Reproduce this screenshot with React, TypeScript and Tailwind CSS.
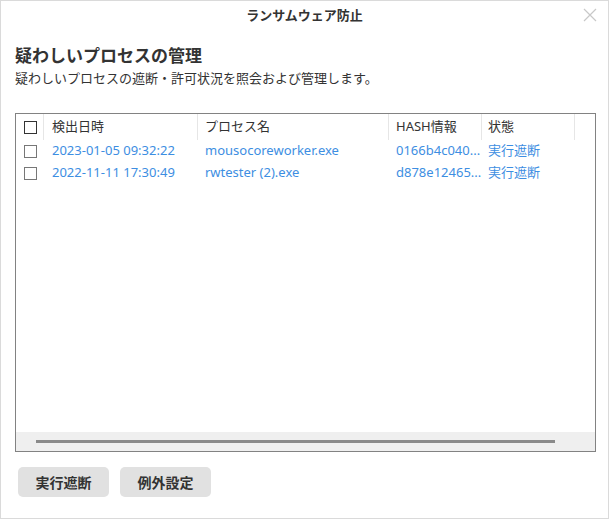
import React from 'react';

const rows = [
  { date: '2023-01-05 09:32:22', name: 'mousocoreworker.exe', hash: '0166b4c040...', state: '実行遮断' },
  { date: '2022-11-11 17:30:49', name: 'rwtester (2).exe', hash: 'd878e12465...', state: '実行遮断' },
];

const Box = ({ dark }: { dark?: boolean }) => (
  <div className={`w-[13px] h-[13px] border bg-white ${dark ? 'border-[#333]' : 'border-[#777]'}`} />
);

export default function App() {
  return (
    <div
      className="w-[610px] h-[520px] bg-white text-[#333]"
      style={{ fontFamily: '"Noto Sans", "Noto Sans CJK JP", sans-serif' }}
    >
      <div className="w-[609px] h-[519px] border border-[#dadada] flex flex-col">
        {/* title bar */}
        <div className="relative h-[28px] flex items-center justify-center">
          <span className="text-[13px] font-semibold leading-none">ランサムウェア防止</span>
          <svg className="absolute right-[10px] top-[6px]" width="16" height="16" viewBox="0 0 16 16">
            <path d="M2 2 L14 14 M14 2 L2 14" stroke="#c8c8c8" strokeWidth="1.2" fill="none" />
          </svg>
        </div>

        <div className="px-[14px] pt-[16px]">
          <h1 className="text-[17px] font-semibold leading-[22px]">疑わしいプロセスの管理</h1>
          <p className="text-[13px] leading-[18px] mt-[2px]">疑わしいプロセスの遮断・許可状況を照会および管理します。</p>

          {/* table */}
          <div className="mt-[26px] w-[581px] h-[339px] border border-[#828282] flex flex-col">
            <div className="flex-1">
              <div className="flex h-[26px] items-center text-[13px]">
                <div className="w-[27px] flex justify-center pl-[1px]"><Box dark /></div>
                <div className="w-[154px] h-full flex items-center pl-[8px] border-l border-[#e6e6e6]">検出日時</div>
                <div className="w-[191px] h-full flex items-center pl-[7px] border-l border-[#e6e6e6]">プロセス名</div>
                <div className="w-[93px] h-full flex items-center pl-[7px] border-l border-[#e6e6e6]">HASH情報</div>
                <div className="w-[93px] h-full flex items-center pl-[6px] border-l border-[#e6e6e6]">状態</div>
                <div className="h-full border-l border-[#e6e6e6]" />
              </div>
              {rows.map((r) => (
                <div key={r.date} className="flex h-[22px] items-center text-[13px] text-[#3d8ee2]">
                  <div className="w-[27px] flex justify-center pl-[1px]"><Box /></div>
                  <div className="w-[154px] pl-[9px]">{r.date}</div>
                  <div className="w-[191px] pl-[8px]">{r.name}</div>
                  <div className="w-[93px] pl-[8px]">{r.hash}</div>
                  <div className="w-[93px] pl-[7px]">{r.state}</div>
                </div>
              ))}
            </div>
            <div className="h-[19px] bg-[#efefef] flex items-center pl-[20px]">
              <div className="w-[519px] h-[3px] bg-[#8a8a8a]" />
            </div>
          </div>

          {/* buttons */}
          <div className="flex gap-[11px] mt-[15px] pl-[3px]">
            <button className="w-[91px] h-[30px] rounded-[5px] bg-[#e1e1e1] text-[14px] font-semibold">実行遮断</button>
            <button className="w-[91px] h-[30px] rounded-[5px] bg-[#e1e1e1] text-[14px] font-semibold">例外設定</button>
          </div>
        </div>
      </div>
    </div>
  );
}
